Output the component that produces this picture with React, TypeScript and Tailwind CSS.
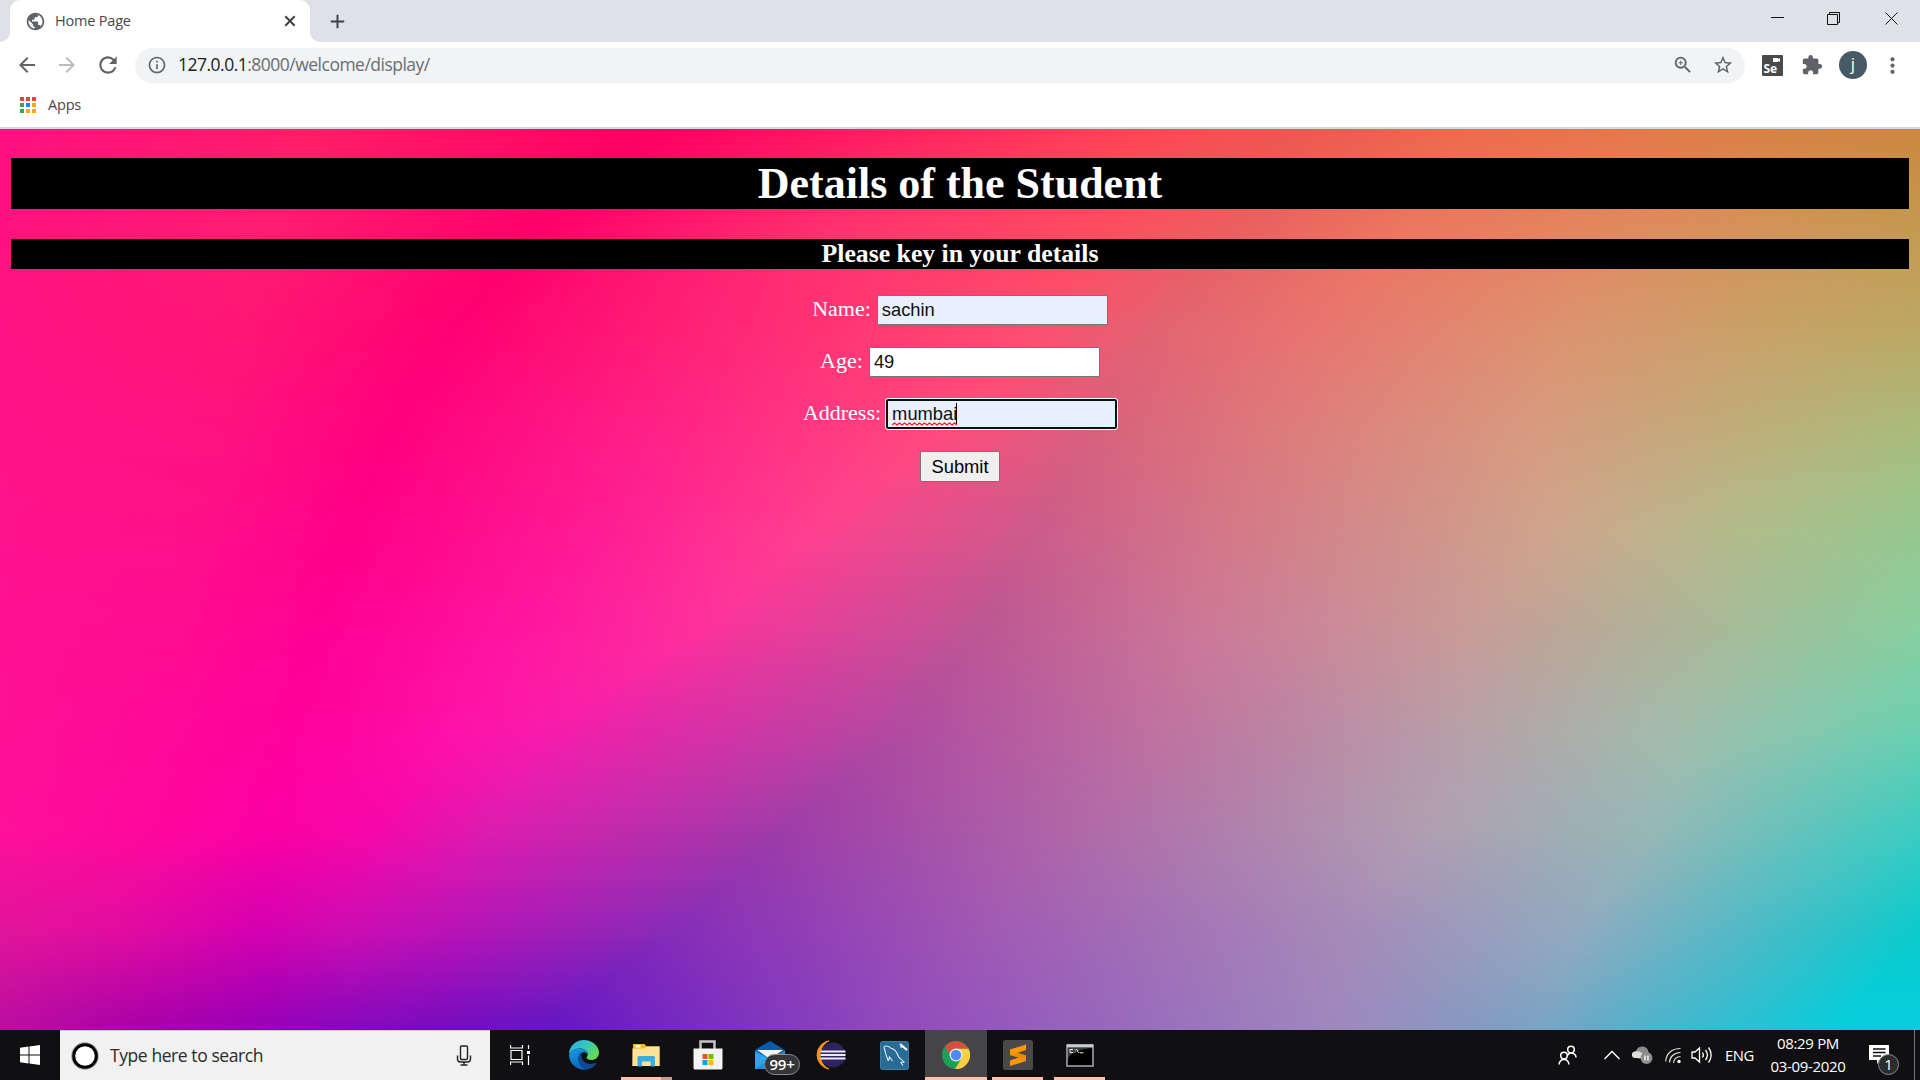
import React from "react";
import {
  MdAdd,
  MdArrowBack,
  MdArrowForward,
  MdExtension,
  MdMoreVert,
  MdOutlineInfo,
  MdPublic,
  MdRefresh,
  MdStarBorder,
  MdZoomIn,
} from "react-icons/md";

type Stop = [number, string];

// Colour bands of the page background: each row lists stops from left to right,
// x in thousandths of the width, and rows are spread evenly from top to bottom.
const MESH: Stop[][] = [
  [[0, "ff1180"], [166, "ff1d66"], [342, "ff0062"], [472, "ff2360"], [590, "ff4655"], [676, "ed5850"], [765, "ee6a4d"], [842, "e8764c"], [918, "d98146"], [1000, "cb883f"]],
  [[0, "ff1280"], [140, "ff1c70"], [278, "ff006a"], [434, "ff3270"], [571, "ff4c60"], [645, "ea6060"], [733, "ec7860"], [848, "e08a5e"], [925, "d19458"], [1000, "c49a52"]],
  [[0, "ff1283"], [128, "ff1675"], [236, "ff0074"], [383, "ff2876"], [535, "ff4d70"], [600, "e26372"], [689, "e87670"], [816, "dc9470"], [918, "c8a268"], [1000, "bca864"]],
  [[0, "ff1288"], [115, "ff1280"], [204, "ff007f"], [344, "ff2288"], [490, "ff4a7d"], [566, "d8607c"], [670, "dd7c7c"], [797, "d89a80"], [906, "bfad7a"], [1000, "a8bc7c"]],
  [[0, "ff128c"], [102, "ff108a"], [182, "ff0088"], [313, "ff1c94"], [422, "ff4090"], [540, "cc5c8a"], [638, "d47888"], [810, "cfa58c"], [912, "b0bd8c"], [1000, "96c890"]],
  [[0, "ff1092"], [96, "ff0c92"], [167, "ff0094"], [274, "ff16a0"], [364, "fd309c"], [510, "bc5694"], [625, "cc7898"], [765, "c89c98"], [893, "a8b898"], [1000, "88d0a0"]],
  [[0, "ff1096"], [89, "ff0898"], [153, "ff009c"], [230, "ff10a8"], [281, "f81aac"], [472, "b04ca0"], [606, "bf72a0"], [759, "b89fa8"], [880, "a0beac"], [1000, "6ad0b0"]],
  [[0, "ff109a"], [70, "ff089c"], [140, "fb00a4"], [191, "f606a8"], [255, "dc1cb0"], [408, "9e3ca8"], [561, "b068a8"], [746, "b0a0b2"], [864, "94b8b6"], [1000, "3accc2"]],
  [[0, "e0149a"], [64, "e00ca0"], [134, "d400b0"], [179, "cc0cb2"], [236, "b812b6"], [351, "862cb8"], [510, "a058b4"], [695, "a688b8"], [820, "92aac0"], [1000, "0ccacc"]],
  [[0, "b80ea0"], [70, "a800a8"], [140, "9400b8"], [185, "8208bc"], [230, "740cc0"], [281, "6414c4"], [459, "9048bc"], [698, "9e88be"], [805, "76a4c4"], [957, "04cedc"]],
];

const channel = (hex: string, i: number) => parseInt(hex.slice(i * 2, i * 2 + 2), 16);

function meshStyle(height: number, step: number): React.CSSProperties {
  const images: string[] = [];
  const positions: string[] = [];
  for (let y = 0; y < height; y += step) {
    const t = (y / height) * (MESH.length - 1);
    const r = Math.min(Math.floor(t), MESH.length - 2);
    const f = t - r;
    const stops = MESH[r].map(([xa, a], k) => {
      const [xb, b] = MESH[r + 1][k];
      const c = [0, 1, 2].map((i) => Math.round(channel(a, i) * (1 - f) + channel(b, i) * f));
      return `rgb(${c.join(",")}) ${((xa * (1 - f) + xb * f) / 10).toFixed(2)}%`;
    });
    images.push(`linear-gradient(to right, ${stops.join(", ")})`);
    positions.push(`0 ${y}px`);
  }
  return {
    backgroundImage: images.join(", "),
    backgroundPosition: positions.join(", "),
    backgroundSize: `100% ${step}px`,
    backgroundRepeat: "no-repeat",
  };
}

const pageBackground = meshStyle(901, 4);

function TabStrip() {
  return (
    <div className="flex h-[42px] shrink-0 items-stretch bg-[#dee1e6]">
      <svg className="h-[42px] w-[10px]" viewBox="0 0 10 42">
        <path d="M0 42a10 10 0 0 0 10-10v10z" fill="#fff" />
      </svg>
      <div className="flex w-[300px] items-center rounded-t-[10px] bg-white pl-[15px] pr-[14px]">
        <MdPublic className="size-[21px] text-[#5f6368]" />
        <span className="ml-[9px] flex-1 text-[14.5px] tracking-[-0.2px] text-[#45494d]">Home Page</span>
        <svg className="size-[12px]" viewBox="0 0 12 12" fill="none" stroke="#3c4043" strokeWidth="2">
          <path d="M1.300 1.300l9.400 9.400M10.700 1.300l-9.400 9.400" />
        </svg>
      </div>
      <svg className="h-[42px] w-[10px]" viewBox="0 0 10 42">
        <path d="M10 42a10 10 0 0 1-10-10v10z" fill="#fff" />
      </svg>
      <div className="flex items-center pl-[6px]">
        <MdAdd className="size-[23px] text-[#3c4043]" />
      </div>
      <svg className="ml-auto mr-[21px] h-[42px] w-[129px]" viewBox="0 0 129 42" fill="none" stroke="#111">
        <path d="M1 17.5h13" />
        <path d="M57.5 14.500h10v10h-10zM59.500 14v-1.500h10v10h-2" />
        <path d="M115.500 12.500l12 12M127.500 12.500l-12 12" />
      </svg>
    </div>
  );
}

function Toolbar() {
  return (
    <div className="flex h-[46px] shrink-0 items-center bg-white text-[#5f6368]">
      <div className="flex w-[135px] items-center pl-[15px]">
        <MdArrowBack className="size-[24px]" />
        <MdArrowForward className="ml-[16px] size-[24px] text-[#babcbe]" />
        <MdRefresh className="ml-[16px] size-[26px]" />
      </div>
      <div className="flex h-[35px] w-[1610px] items-center rounded-full bg-[#f1f3f4] pl-[12px] pr-[11px]">
        <MdOutlineInfo className="size-[20px]" />
        <span className="ml-[11px] flex-1 pb-px text-[17.5px] tracking-[-0.51px] text-[#6a6e72]">
          <span className="text-[#202124]">127.0.0.1</span>:8000/welcome/display/
        </span>
        <MdZoomIn className="size-[22px]" />
        <MdStarBorder className="ml-[18px] size-[22px]" />
      </div>
      <svg className="ml-[17px] size-[21px]" viewBox="0 0 21 21">
        <rect width="21" height="21" rx="1" fill="#4a4a4a" />
        <path d="M11 3h5v1l2-1v4l-2-1v1h-5z" fill="#fff" />
        <text x="1.500" y="18" fontSize="12" fontWeight="700" fill="#fff" fontFamily="Open Sans, sans-serif">
          Se
        </text>
      </svg>
      <MdExtension className="ml-[18px] size-[22px]" />
      <span className="ml-[16px] flex size-[28px] items-center justify-center rounded-full bg-[#455a64] pb-[2px] text-[17px] text-white">
        j
      </span>
      <MdMoreVert className="ml-[13px] size-[25px]" />
    </div>
  );
}

const APP_DOTS = ["#ea4335", "#ea4335", "#ea4335", "#34a853", "#1a86f0", "#fbab05", "#34a853", "#fbab05", "#fbab05"];

function BookmarksBar() {
  return (
    <div className="flex h-[41px] shrink-0 items-center border-b-2 border-[#d2dbe2] bg-white pb-[5px] pl-[20px]">
      <div className="grid grid-cols-3 gap-[2px]">
        {APP_DOTS.map((c, i) => (
          <span key={i} className="size-[4px]" style={{ backgroundColor: c }} />
        ))}
      </div>
      <span className="ml-[12px] text-[14.5px] tracking-[-0.2px] text-[#45494d]">Apps</span>
    </div>
  );
}

function Page() {
  return (
    <main
      className="h-[901px] shrink-0 px-[11px] pt-[29px] font-['Liberation_Serif',serif] text-[22px] text-white"
      style={pageBackground}
    >
      <h1 className="h-[51px] bg-black text-center text-[44px] leading-[51px] font-bold">Details of the Student</h1>
      <h3 className="mt-[30px] h-[30px] bg-black text-center text-[25.74px] leading-[29px] font-bold">
        Please key in your details
      </h3>
      <form className="mt-[26px] flex flex-col items-center font-normal">
        <Row label="Name:">
          <span className="flex h-[30px] w-[231px] items-center rounded-[1px] border border-[#767676] bg-[#e8f0fe] pb-[2px] pl-[4px]">sachin</span>
        </Row>
        <Row label="Age:">
          <span className="flex h-[30px] w-[231px] items-center rounded-[1px] border border-[#767676] bg-white pb-[2px] pl-[4px]">49</span>
        </Row>
        <Row label="Address:">
          <span className="-ml-px flex h-[30px] w-[231px] items-center rounded-[2px] border-2 border-[#101010] bg-[#e8f0fe] pb-[2px] pl-[4px] outline-1 outline-white">
            <span className="relative">
              mumbai
              <svg className="absolute bottom-[-2px] left-0 h-[4px] w-[65px]" viewBox="0 0 65 4" fill="none" stroke="#f01c1c" strokeWidth="1.300">
                <path d="M0 3l2.500-2 2.500 2 2.500-2 2.500 2 2.500-2 2.500 2 2.500-2 2.500 2 2.500-2 2.500 2 2.500-2 2.500 2 2.500-2 2.500 2 2.500-2 2.500 2 2.500-2 2.500 2 2.500-2 2.500 2 2.500-2 2.500 2 2.500-2 2.500 2 2.500-2 2.500 2" />
              </svg>
            </span>
            <span className="-ml-px h-[21px] w-px bg-black" />
          </span>
        </Row>
        <button
          type="button"
          className="flex h-[31px] w-[80px] items-center justify-center rounded-[2px] border border-[#767676] bg-[#efefef] pt-px font-['Liberation_Sans',sans-serif] text-[18.33px] text-black"
        >
          Submit
        </button>
      </form>
    </main>
  );
}

function Row({ label, children }: { label: string; children: React.ReactNode }) {
  return (
    <div className="flex h-[52px] items-start gap-[6px] leading-[28px]">
      <span>{label}</span>
      <span className="font-['Liberation_Sans',sans-serif] text-[18.33px] leading-[21px] text-[#101010]">{children}</span>
    </div>
  );
}

function TaskCell({ children, active, line }: { children: React.ReactNode; active?: boolean; line?: string }) {
  return (
    <div className={active ? "relative flex h-[50px] w-[62px] items-center justify-center bg-[#454447]" : "relative flex h-[50px] w-[62px] items-center justify-center"}>
      {children}
      {line && <span className={`absolute bottom-0 h-[3px] bg-[#ffbfaf] ${line}`} />}
    </div>
  );
}

function Taskbar() {
  return (
    <footer className="flex h-[50px] shrink-0 items-center bg-[#101013] text-white">
      <div className="flex w-[60px] items-center justify-center">
        <svg className="size-[20px]" viewBox="0 0 20 20" fill="#fff">
          <path d="M0 2.800l8.500-1.200v7.900H0zM9.500 1.400L20 0v9.500H9.500zM0 10.500h8.500v7.900L0 17.200zM9.500 10.500H20V20L9.500 18.600z" />
        </svg>
      </div>
      <div className="flex h-[50px] w-[430px] items-center border-t border-[#c9c9c9] bg-[#f1f1f1] pl-[11px] pr-[18px]">
        <svg className="size-[28px]" viewBox="0 0 28 28">
          <circle cx="14" cy="14" r="13" fill="none" stroke="#999" strokeWidth="1.500" />
          <circle cx="14" cy="14" r="11.300" fill="#fff" stroke="#000" strokeWidth="3" />
        </svg>
        <span className="ml-[11px] flex-1 text-[17.5px] tracking-[-0.42px] text-[#2b2b2b]">Type here to search</span>
        <svg className="h-[21px] w-[16px]" viewBox="0 0 16 21" fill="none" stroke="#222" strokeWidth="1.400">
          <rect x="4.500" y="1" width="7" height="13.500" rx="1" />
          <path d="M1.500 10.500v3.500a3 3 0 0 0 3 3h7a3 3 0 0 0 3-3v-3.500M8 17v3M4.500 20h7" />
        </svg>
      </div>
      <div className="flex w-[63px] items-center pl-[20px]">
        <svg className="h-[20px] w-[21px]" viewBox="0 0 21 20" fill="none" stroke="#fff">
          <path d="M1 5.500h11v9H1zM.5 0v3h12V0M.5 20v-3h12v3M18.500 0v4M18.500 10.500V20" strokeWidth="1.200" />
          <path d="M17 6h3v3h-3z" fill="#fff" stroke="none" />
        </svg>
      </div>
      <TaskCell>
        <svg className="size-[30px]" viewBox="0 0 30 30">
          <defs>
            <linearGradient id="edgeTop" x1="0" y1="0" x2="1" y2=".6">
              <stop offset="0" stopColor="#2aa8df" />
              <stop offset=".5" stopColor="#34c5c3" />
              <stop offset="1" stopColor="#62dc4a" />
            </linearGradient>
            <linearGradient id="edgeLeft" x1="0" y1="0" x2=".4" y2="1">
              <stop offset="0" stopColor="#1b9de2" />
              <stop offset="1" stopColor="#0b63bd" />
            </linearGradient>
          </defs>
          <path d="M0 14C0 6 7 0 15 0s15 6 15 12.500c0 5-4 7.500-7.500 7.500-3 0-5-1.200-5-2.200 0-.8 1.200-1.500 1.200-3.600 0-3-3.200-5.700-7.700-5.700C5 8.500 1 12 0 14z" fill="url(#edgeTop)" />
          <path d="M0 15C1 10.500 6 8.400 11 8.500c4.500.1 7.700 2.800 7.700 5.700-1-1.500-2.700-2.200-4.200-2-3.500.4-5.500 4-4.800 8 .8 5 5.300 8.600 9.300 9.300C9 31.500 0 24 0 15z" fill="url(#edgeLeft)" />
          <path d="M12.500 13c-2 1.300-3.300 4-2.800 7.200.8 5.500 6 9.300 10 9 3.300-1 6-3.200 7.600-5.700.3-.7-.2-1-.8-.7-1.500.8-3.500 1.200-5.200 1.100-5-.2-8.500-3.700-8.800-7.400-.1-1.500.2-2.700 0-3.500z" fill="#114a91" />
        </svg>
      </TaskCell>
      <TaskCell>
        <svg className="h-[25px] w-[28px]" viewBox="0 0 28 25">
          <path d="M1 1h11.500l2 2.500H27.500V23H.5z" fill="#f0b72f" />
          <path d="M3.500 2h5v2.500h-5z" fill="#fff" />
          <path d="M.5 5.500h12l2-2h13V23H.5z" fill="#ffe394" />
          <path d="M5.500 23.500v-9a1.500 1.500 0 0 1 1.500-1.500h14.500a1.500 1.500 0 0 1 1.500 1.500v9h-4.500v-5h-8.500v5z" fill="#3cabdd" />
        </svg>
        <span className="absolute bottom-0 left-[6px] flex h-[3px] w-[51px] bg-[#ffbfaf]">
          <span className="ml-auto w-[11px] bg-[#c99a90]" />
        </span>
      </TaskCell>
      <TaskCell>
        <svg className="size-[30px]" viewBox="0 0 30 30">
          <path d="M7.500 9V1.500h14V9" fill="none" stroke="#c6c6c6" strokeWidth="2.500" />
          <path d="M.5 8.500h29v19.500a1.500 1.500 0 0 1-1.500 1.500H2A1.500 1.500 0 0 1 .5 28z" fill="#f3f3f3" />
          <path d="M9.500 14h5v5h-5z" fill="#f25022" />
          <path d="M15.500 14h5v5h-5z" fill="#7fba00" />
          <path d="M9.500 20h5v5h-5z" fill="#00a4ef" />
          <path d="M15.500 20h5v5h-5z" fill="#ffb900" />
        </svg>
      </TaskCell>
      <TaskCell>
        <svg className="size-[30px]" viewBox="0 0 30 30">
          <path d="M0 10L15 1l15 9v8H0z" fill="#0a5ba8" />
          <path d="M2 10h26l-13 9z" fill="#f4f4f4" />
          <path d="M0 11l15 8 15-8v18H0z" fill="#2aa7e8" />
          <path d="M0 29l15-10 15-8v18z" fill="#1b8edb" />
        </svg>
        <span className="absolute top-[24px] left-[25px] flex h-[21px] w-[36px] items-center justify-center rounded-full border border-[#8b8b8b] bg-[#353638] text-[15px] font-semibold tracking-[-0.3px]">
          99+
        </span>
      </TaskCell>
      <TaskCell>
        <svg className="mr-[3px] size-[30px]" viewBox="0 0 30 30">
          <path d="M13 .800A14.300 14.300 0 0 0 13 29C7 26 4.500 21 4.500 15S7 4 13 .800z" fill="#f7941e" stroke="#f7941e" strokeWidth="1" />
          <circle cx="17" cy="15" r="12.500" fill="#2f2361" />
          <path d="M4.500 11.500h25M4.500 15h25M4.500 18.500h25" stroke="#eeeaf6" strokeWidth="2" />
        </svg>
      </TaskCell>
      <TaskCell>
        <svg className="size-[29px]" viewBox="0 0 29 29">
          <rect x=".5" y=".5" width="28" height="28" rx="2" fill="#286c96" stroke="#3b7fa8" />
          <path d="M8.500 19.500c-1.500 0-.5-2-2-4.500-1-2-1-3.500-1.500-5.500S3 6.500 4.500 5.500s4.500-.3 6 1.500c4 .8 6.500 4 8 8.500.8 2 4 3.500 5.500 5.500l-3 .5 2 3M8.500 19.500l1-3.500 3 4" fill="none" stroke="#e5edf3" strokeWidth="1.100" />
          <path d="M20 3l3 2.500L27 9M20.500 6l3-1" stroke="#fff" strokeWidth="2" fill="none" />
        </svg>
      </TaskCell>
      <TaskCell active line="inset-x-0">
        <svg className="size-[28px]" viewBox="0 0 28 28">
          <circle cx="14" cy="14" r="14" fill="#1b9f58" />
          <path d="M14 7.500h12.400A14 14 0 0 1 13 28l6.600-10.700z" fill="#ffcd40" />
          <path d="M3 5.500l5.300 9L14 7.500h12.300A14 14 0 0 0 3 5.500z" fill="#dc4c3f" />
          <circle cx="14" cy="14" r="6.500" fill="#f1f1f1" />
          <circle cx="14" cy="14" r="5.200" fill="#4a8af4" />
        </svg>
      </TaskCell>
      <TaskCell line="left-[5px] w-[51px]">
        <svg className="size-[30px]" viewBox="0 0 30 30">
          <rect width="30" height="30" rx="2.500" fill="#494949" />
          <path d="M7 9.500L23 4.500v5.500l-9 3 9 2.500v5.500L7 26v-5.500l9-3-9-2.500z" fill="#ff9800" />
          <path d="M7 15l9 2.500 7 3.500v-5.500l-9-2.800z" fill="#f08c04" />
        </svg>
      </TaskCell>
      <TaskCell line="left-[5px] w-[51px]">
        <svg className="h-[23px] w-[28px]" viewBox="0 0 28 23">
          <path d="M1 1h26v21H1z" fill="#000" stroke="#a6adb2" strokeWidth="1.500" />
          <path d="M1 .5h26v3H1z" fill="#c9ced2" />
          <path d="M2 4h24C16 5 6 8 2 14z" fill="#3a3a3a" />
          <path d="M7 5.500H4v3h3M9 5.500v.8M9 7.800v.8M10.500 5l2 3.800M13.500 8.800h4" fill="none" stroke="#eee" />
        </svg>
      </TaskCell>

      <div className="ml-auto flex h-[50px] items-center">
        <svg className="h-[20px] w-[19px]" viewBox="0 0 19 20" fill="none" stroke="#fff" strokeWidth="1.500">
          <circle cx="13" cy="4.500" r="3.300" />
          <path d="M9.500 10.500a4.500 4.500 0 0 1 8.500 2" />
          <circle cx="6" cy="10.500" r="3.300" />
          <path d="M1 19.500c.5-3.500 2.500-5 5-5s4.500 1.500 5 5" />
        </svg>
        <svg className="ml-[27px] h-[10px] w-[16px]" viewBox="0 0 16 10" fill="none" stroke="#fff" strokeWidth="1.400">
          <path d="M.5 9L8 1.500 15.500 9" />
        </svg>
        <svg className="ml-[12px] h-[18px] w-[21px]" viewBox="0 0 21 18">
          <path d="M4 12a4 4 0 0 1 0-7 6.500 6.500 0 0 1 12-1l1 5-7 4z" fill="#8b8b8b" />
          <path d="M0 10a3.500 3.500 0 0 1 4-4.500C8 4 12 8 12 12H3a3 3 0 0 1-3-2z" fill="#dedede" />
          <circle cx="14.500" cy="12" r="6" fill="#8e8e8e" />
          <path d="M13 9.500v5M16 9.500v5" stroke="#fff" strokeWidth="1.300" />
        </svg>
        <svg className="ml-[12px] size-[17px]" viewBox="0 0 17 17" fill="none" stroke="#ddd" strokeWidth="1.200">
          <path d="M.7 14.500C1 6.500 7 1.500 15.500 1.500M4.500 15.500c0-5.500 4.500-10 11-10M8.500 16c0-3.500 3-6.500 7-6.500" />
          <circle cx="14" cy="14.500" r="1.700" fill="#fff" stroke="none" />
        </svg>
        <svg className="ml-[9px] h-[18px] w-[22px]" viewBox="0 0 22 18" fill="none" stroke="#fff" strokeWidth="1.300">
          <path d="M1 6h3l4.500-4v14L4 12H1zM11.500 6.500c1 1.500 1 3.500 0 5M14.500 4c2.300 3 2.300 7 0 10M17.500 1.500c3.500 4.500 3.500 10.500 0 15" />
        </svg>
        <span className="ml-[12px] w-[45px] text-[14.800px] tracking-[-0.4px]">ENG</span>
        <div className="flex w-[76px] flex-col items-center text-[15px] leading-[23px] tracking-[-0.32px] whitespace-nowrap">
          <span>08:29 PM</span>
          <span>03-09-2020</span>
        </div>
        <div className="relative mt-[10px] mr-[15px] ml-[23px] h-[30px] w-[30px]">
          <svg className="h-[19px] w-[20px]" viewBox="0 0 20 19">
            <path d="M0 0h20v15h-9l-3 4v-4H0z" fill="#fff" />
            <path d="M4 4h12.500M4 7.500h12.500M4 11h8" stroke="#101013" strokeWidth="1.400" />
          </svg>
          <span className="absolute top-[9px] left-[9px] flex size-[21px] items-center justify-center rounded-full border border-[#8b8b8b] bg-[#2b2c2e] text-[15px]">
            1
          </span>
        </div>
        <span className="mr-[5px] h-[50px] w-px bg-[#77777a]" />
      </div>
    </footer>
  );
}

export default function App() {
  return (
    <div className="flex h-[1080px] w-[1920px] flex-col overflow-hidden font-['Open_Sans',sans-serif]">
      <TabStrip />
      <Toolbar />
      <BookmarksBar />
      <Page />
      <Taskbar />
    </div>
  );
}
